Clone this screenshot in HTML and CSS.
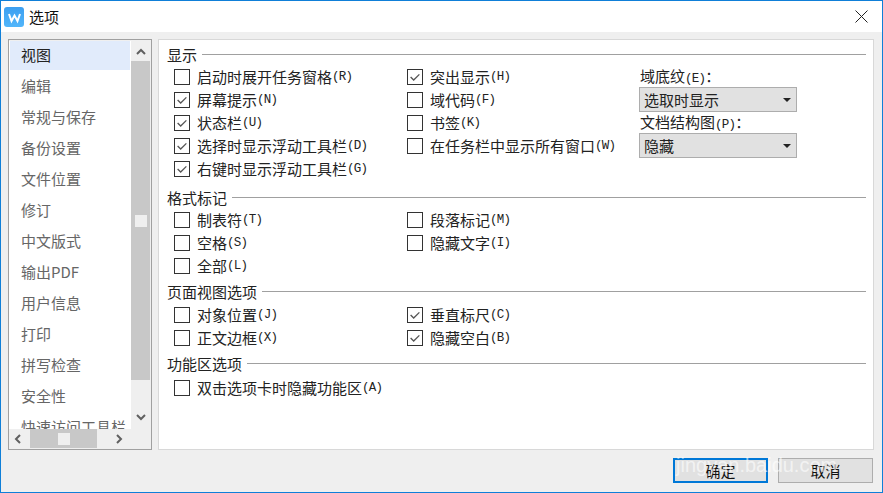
FILE: index.html
```html
<!DOCTYPE html>
<html lang="zh-CN">
<head>
<meta charset="utf-8">
<title>选项</title>
<link rel="stylesheet" href="styles.css">
</head>
<body>
<svg class="defs" width="0" height="0" aria-hidden="true">
  <symbol id="tick" viewBox="0 0 16 16"><path d="M3 8 L6.5 11.5 L13 5" fill="none" stroke="#555" stroke-width="1.5"/></symbol>
  <symbol id="chev" viewBox="0 0 10 10"><path d="M1 7 L5 3 L9 7" fill="none" stroke="#606060" stroke-width="2"/></symbol>
</svg>
<div class="window">
  <header class="titlebar">
    <svg class="logo" viewBox="0 0 20 20"><defs><linearGradient id="lg" x1="0" y1="0" x2="0" y2="1"><stop offset="0" stop-color="#3c9ff0"/><stop offset="1" stop-color="#52b6fb"/></linearGradient></defs><rect width="20" height="20" rx="3" fill="url(#lg)"/><path d="M5 7 L7.5 14 L10.5 8.5 L13.5 14 L16 7" fill="none" stroke="#fff" stroke-width="2"/></svg>
    <span class="title">选项</span>
    <svg class="close" viewBox="0 0 13 13"><path d="M0.5 0.5 L12.5 12.5 M12.5 0.5 L0.5 12.5" stroke="#222" stroke-width="1" fill="none"/></svg>
  </header>
  <div class="content">
    <div class="main">
      <nav class="sidebar">
        <div class="sidebar-top">
          <ul class="list">
            <li class="item selected">视图</li>
            <li class="item">编辑</li>
            <li class="item">常规与保存</li>
            <li class="item">备份设置</li>
            <li class="item">文件位置</li>
            <li class="item">修订</li>
            <li class="item">中文版式</li>
            <li class="item">输出PDF</li>
            <li class="item">用户信息</li>
            <li class="item">打印</li>
            <li class="item">拼写检查</li>
            <li class="item">安全性</li>
            <li class="item">快速访问工具栏</li>
          </ul>
          <div class="vscroll">
            <svg class="sb-up" viewBox="0 0 10 10"><use href="#chev"/></svg>
            <div class="vthumb"><i class="grip"></i></div>
            <svg class="sb-down" viewBox="0 0 10 10"><use href="#chev"/></svg>
          </div>
        </div>
        <div class="hscroll">
          <svg class="sb-left" viewBox="0 0 10 10"><use href="#chev"/></svg>
          <div class="hthumb"><i class="grip"></i></div>
          <svg class="sb-right" viewBox="0 0 10 10"><use href="#chev"/></svg>
        </div>
      </nav>
      <section class="panel">
        <div class="legend legend-a"><span>显示</span><i></i></div>
        <div class="group">
          <div class="col">
            <label class="opt"><span class="box"></span>启动时展开任务窗格<span class="k">(R)</span></label>
            <label class="opt"><span class="box"><svg><use href="#tick"/></svg></span>屏幕提示<span class="k">(N)</span></label>
            <label class="opt"><span class="box"><svg><use href="#tick"/></svg></span>状态栏<span class="k">(U)</span></label>
            <label class="opt"><span class="box"><svg><use href="#tick"/></svg></span>选择时显示浮动工具栏<span class="k">(D)</span></label>
            <label class="opt"><span class="box"><svg><use href="#tick"/></svg></span>右键时显示浮动工具栏<span class="k">(G)</span></label>
          </div>
          <div class="col">
            <label class="opt"><span class="box"><svg><use href="#tick"/></svg></span>突出显示<span class="k">(H)</span></label>
            <label class="opt"><span class="box"></span>域代码<span class="k">(F)</span></label>
            <label class="opt"><span class="box"></span>书签<span class="k">(K)</span></label>
            <label class="opt"><span class="box"></span>在任务栏中显示所有窗口<span class="k">(W)</span></label>
          </div>
          <div class="col col-fields">
            <div class="field-label">域底纹<span class="k">(E)</span>：</div>
            <div class="select"><span>选取时显示</span><i class="caret"></i></div>
            <div class="field-label">文档结构图<span class="k">(P)</span>：</div>
            <div class="select"><span>隐藏</span><i class="caret"></i></div>
          </div>
        </div>
        <div class="legend legend-b"><span>格式标记</span><i></i></div>
        <div class="group">
          <div class="col">
            <label class="opt"><span class="box"></span>制表符<span class="k">(T)</span></label>
            <label class="opt"><span class="box"></span>空格<span class="k">(S)</span></label>
            <label class="opt"><span class="box"></span>全部<span class="k">(L)</span></label>
          </div>
          <div class="col">
            <label class="opt"><span class="box"></span>段落标记<span class="k">(M)</span></label>
            <label class="opt"><span class="box"></span>隐藏文字<span class="k">(I)</span></label>
          </div>
        </div>
        <div class="legend legend-c"><span>页面视图选项</span><i></i></div>
        <div class="group">
          <div class="col">
            <label class="opt"><span class="box"></span>对象位置<span class="k">(J)</span></label>
            <label class="opt"><span class="box"></span>正文边框<span class="k">(X)</span></label>
          </div>
          <div class="col">
            <label class="opt"><span class="box"><svg><use href="#tick"/></svg></span>垂直标尺<span class="k">(C)</span></label>
            <label class="opt"><span class="box"><svg><use href="#tick"/></svg></span>隐藏空白<span class="k">(B)</span></label>
          </div>
        </div>
        <div class="legend legend-d"><span>功能区选项</span><i></i></div>
        <div class="group">
          <div class="col">
            <label class="opt"><span class="box"></span>双击选项卡时隐藏功能区<span class="k">(A)</span></label>
          </div>
        </div>
      </section>
    </div>
    <footer class="actions">
      <button class="btn primary">确定</button>
      <button class="btn">取消</button>
    </footer>
  </div>
  <div class="watermark">jingyan.baidu.com</div>
</div>
</body>
</html>
```
FILE: styles.css
```css
* { box-sizing: border-box; }
html, body { margin: 0; padding: 0; }
body {
  width: 883px;
  height: 493px;
  overflow: hidden;
  font-family: "Noto Sans CJK SC", "Liberation Sans", sans-serif;
  font-size: 15px;
  color: #222;
}
.defs { position: absolute; }
.window {
  position: relative;
  width: 883px;
  height: 493px;
  border: 1px solid #0f7fd8;
  background: #efefef;
  display: flex;
  flex-direction: column;
}
.titlebar {
  height: 31px;
  flex: none;
  background: #fff;
  display: flex;
  align-items: center;
  padding: 0 14px 0 3px;
}
.logo { width: 20px; height: 20px; margin-right: 5px; }
.title { flex: 1; line-height: 20px; color: #111; }
.close { width: 13px; height: 13px; }
.content {
  flex: 1;
  display: flex;
  flex-direction: column;
  padding: 7px 8px 8px 7px;
}
.main { display: flex; gap: 6px; height: 411px; flex: none; }
.sidebar {
  width: 144px;
  flex: none;
  border: 1px solid #a0a0a0;
  background: #efefef;
  display: flex;
  flex-direction: column;
  padding: 1px 1px 1px 0;
}
.sidebar-top { flex: 1; display: flex; min-height: 0; }
.list {
  list-style: none;
  margin: 0;
  padding: 0 0 0 1px;
  width: 122px;
  background: #fff;
  overflow: hidden;
}
.item {
  height: 31px;
  line-height: 27px;
  padding-left: 11px;
  color: #666;
  white-space: nowrap;
}
.item.selected { color: #222; background: #e1ebfb; width: 120px; height: 29px; margin-bottom: 2px; line-height: 27px; }
.vscroll { flex: 1; display: flex; flex-direction: column; align-items: center; }
.sb-up, .sb-down, .sb-left, .sb-right { width: 10px; height: 10px; flex: none; }
.sb-up { margin: 6px 0 4px; }
.sb-down { margin-top: 32px; transform: rotate(180deg); }
.vthumb {
  width: 100%;
  height: 319px;
  background: #c8c8c8;
  display: flex;
  align-items: center;
  justify-content: center;
}
.grip { display: block; width: 12px; height: 12px; background: #efefef; }
.hscroll { height: 19px; flex: none; display: flex; align-items: center; padding-left: 4px; }
.sb-left { transform: rotate(-90deg); margin-right: 7px; }
.hthumb {
  width: 67px;
  height: 19px;
  background: #c8c8c8;
  display: flex;
  align-items: center;
  justify-content: center;
  margin-right: 17px;
}
.sb-right { transform: rotate(90deg); }
.panel {
  flex: 1;
  background: #fff;
  border: 1px solid #d8d8d8;
  padding: 4px 7px 0 8px;
}
.legend {
  display: flex;
  align-items: center;
  gap: 5px;
  color: #222;
}
.legend-a { height: 21px; }
.legend-b { height: 22px; margin-top: 6px; }
.legend-c { height: 23px; margin-top: 3px; }
.legend-d { height: 26px; margin-top: 1px; }
.legend i { flex: 1; height: 1px; background: #a0a0a0; }
.group { display: flex; padding-left: 7px; }
.col { width: 233px; flex: none; display: flex; flex-direction: column; }
.opt { display: flex; align-items: center; height: 23px; white-space: nowrap; }
.box {
  width: 16px;
  height: 16px;
  flex: none;
  border: 1px solid #333;
  background: #fff;
  margin-right: 7px;
  display: flex;
  align-items: center;
  justify-content: center;
}
.box svg { width: 14px; height: 14px; }
.k { font-family: "Liberation Mono", monospace; font-size: 12.5px; letter-spacing: -0.8px; }
.col-fields { margin-left: -1px; width: 158px; }
.field-label { height: 22px; line-height: 22px; margin-left: 1px; white-space: nowrap; }
.select {
  height: 25px;
  margin-bottom: -1px;
  background: #e1e1e1;
  border: 1px solid #adadad;
  display: flex;
  align-items: center;
  justify-content: space-between;
  padding: 0 4px 0 4px;
  position: relative;
  z-index: 1;
}
.caret {
  width: 0; height: 0;
  border-left: 4px solid transparent;
  border-right: 4px solid transparent;
  border-top: 4px solid #222;
  margin-right: 1px;
}
.actions {
  display: flex;
  justify-content: flex-end;
  gap: 10px;
  margin-top: 8px;
  margin-right: 1px;
}
.btn {
  width: 95px;
  height: 25px;
  padding: 0;
  background: #e1e1e1;
  border: 1px solid #adadad;
  font: inherit;
  color: #111;
}
.btn.primary { border: 2px solid #0078d7; }
.watermark {
  position: absolute;
  left: 675px;
  top: 452px;
  font-family: "Liberation Sans", sans-serif;
  font-size: 20px;
  line-height: 24px;
  color: rgba(255, 255, 255, 0.6);
  white-space: nowrap;
}
```
